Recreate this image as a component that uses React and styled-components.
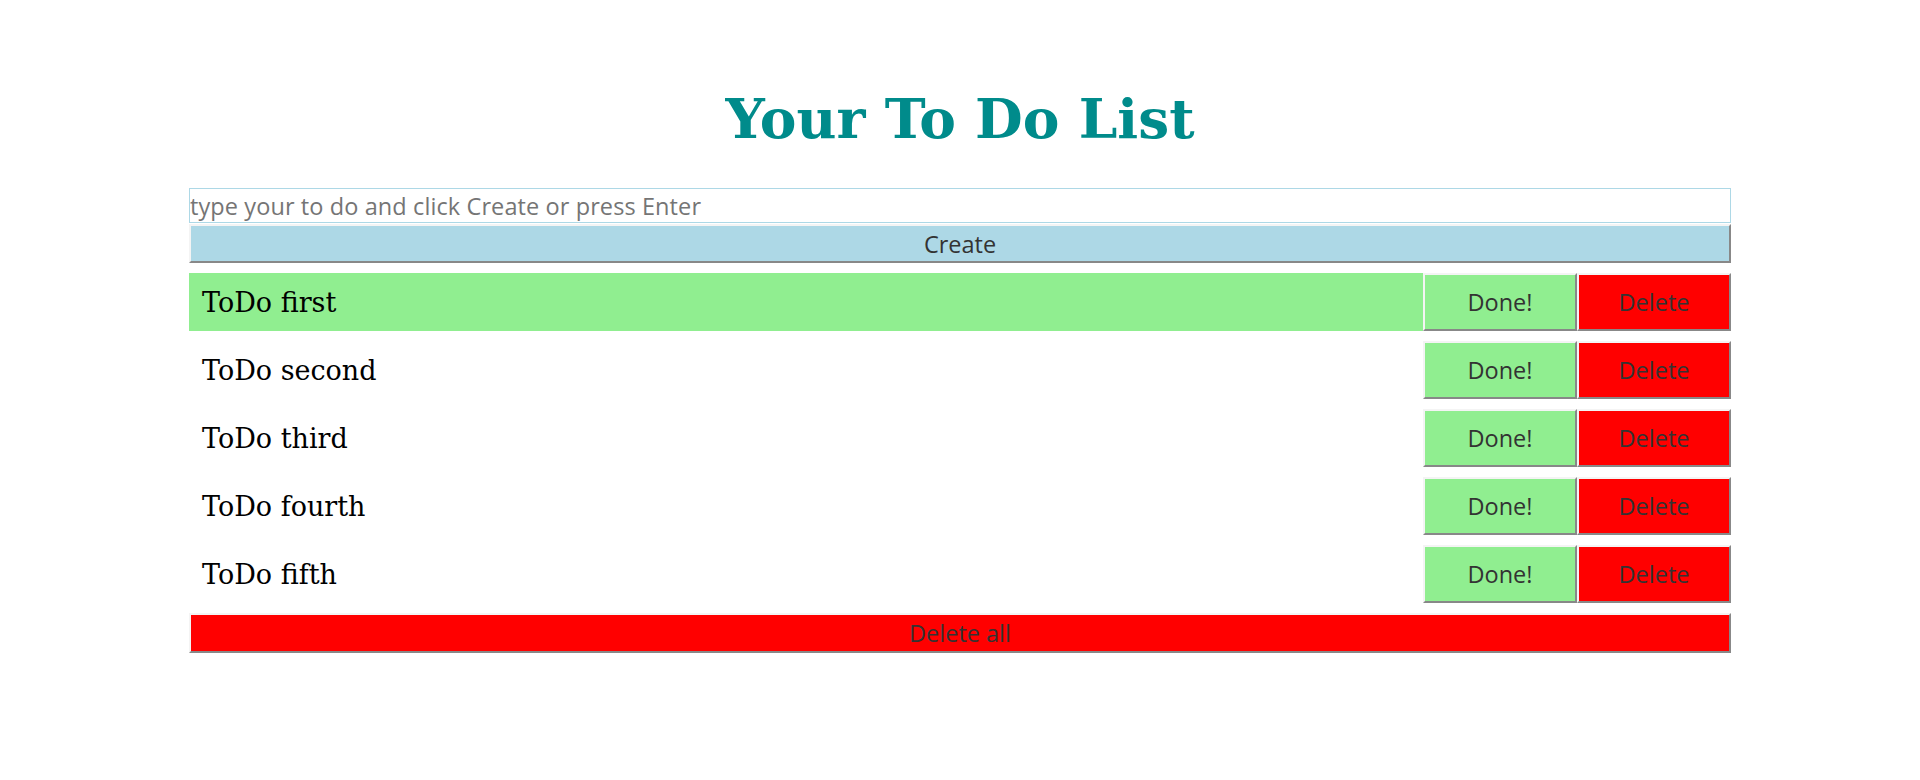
import React, { useState } from "react";
import styled, { createGlobalStyle } from "styled-components";

const Global = createGlobalStyle`
  html, body { margin: 0; padding: 0; background: #fff; }
  body { font-family: "DejaVu Serif", serif; }
`;

const Page = styled.div`
  width: 1542px;
  margin: 0 auto;
  padding-top: 1px;
`;

const Title = styled.h1`
  margin: 85px 0 36px;
  text-align: center;
  color: #008b8b;
  font-family: "DejaVu Serif", serif;
  font-weight: bold;
  font-size: 55px;
  line-height: 1.2;
`;

const Input = styled.input`
  display: block;
  box-sizing: border-box;
  width: 100%;
  height: 35px;
  margin: 0;
  padding: 0;
  border: 1px solid lightblue;
  font-family: "Open Sans", sans-serif;
  font-size: 23.5px;
  letter-spacing: 0.1px;
  color: #333;
  outline: none;
  &::placeholder { color: #757575; }
`;

const BaseButton = styled.button`
  box-sizing: border-box;
  margin: 0;
  padding: 0;
  border: 2px solid;
  border-color: #f4f4f4 #888 #888 #f4f4f4;
  color: #333;
  font-family: "Open Sans", sans-serif;
  font-size: 23.5px;
  cursor: pointer;
`;

const WideButton = styled(BaseButton)`
  display: block;
  width: 100%;
  height: ${(p) => p.$h}px;
  background: ${(p) => p.$bg};
  margin-top: ${(p) => p.$mt}px;
`;

const List = styled.ul`
  list-style: none;
  margin: 10px 0 0;
  padding: 0;
  display: flex;
  flex-direction: column;
  gap: 10px;
`;

const Row = styled.li`
  display: flex;
  height: 58px;
`;

const ItemText = styled.span`
  flex: 1;
  display: flex;
  align-items: center;
  padding-left: 13px;
  font-family: "DejaVu Serif", serif;
  font-size: 27px;
  color: #000;
  background: ${(p) => (p.$done ? "lightgreen" : "transparent")};
`;

const ActionButton = styled(BaseButton)`
  width: 154px;
  height: 100%;
  background: ${(p) => p.$bg};
`;

const initial = [
  { text: "ToDo first", done: true },
  { text: "ToDo second", done: false },
  { text: "ToDo third", done: false },
  { text: "ToDo fourth", done: false },
  { text: "ToDo fifth", done: false },
];

export default function App() {
  const [items] = useState(initial);
  return (
    <>
      <Global />
      <Page>
        <Title>Your To Do List</Title>
        <Input placeholder="type your to do and click Create or press Enter" />
        <WideButton $bg="lightblue" $h={39} $mt={1}>Create</WideButton>
        <List>
          {items.map((it) => (
            <Row key={it.text}>
              <ItemText $done={it.done}>{it.text}</ItemText>
              <ActionButton $bg="lightgreen">Done!</ActionButton>
              <ActionButton $bg="red">Delete</ActionButton>
            </Row>
          ))}
        </List>
        <WideButton $bg="red" $h={40} $mt={10}>Delete all</WideButton>
      </Page>
    </>
  );
}
